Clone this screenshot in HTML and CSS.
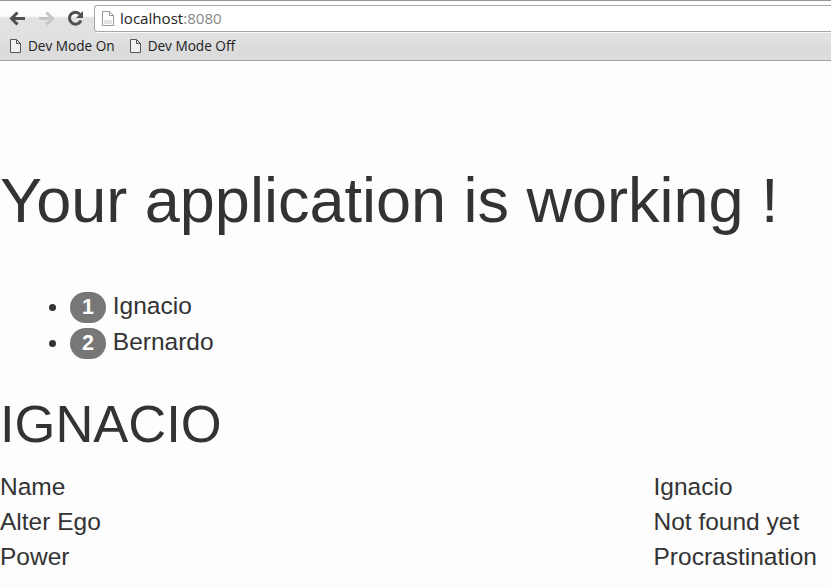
FILE: index.html
```html
<!DOCTYPE html>
<html lang="en">
<head>
<meta charset="utf-8">
<title>localhost:8080</title>
<link rel="stylesheet" href="styles.css">
</head>
<body>
<header class="chrome">
  <div class="toolbar">
    <svg class="nav" width="94" height="31" viewBox="0 0 94 31" fill="none" stroke-width="3">
      <path stroke="#505050" d="M25 18.500H12M17.500 12.500l-6 6 6 6"/>
      <path stroke="#c6c6c6" d="M39 18.500h13M46.500 12.500l6 6-6 6"/>
      <path stroke="#505050" d="M80 14.200a6 6 0 1 0 1 6.300"/>
      <path fill="#505050" d="M83 11v7h-7z"/>
    </svg>
    <div class="address">
      <svg class="page" width="12" height="15" viewBox="0 0 12 15" fill="#fff" stroke="#999"><path d="M.5.500h7l4 4v10H.500zM7.500.500v4h4"/><path fill="#e4e4e4" stroke="none" d="M2 9h8v4H2z"/></svg>
      <span>localhost<span class="port">:8080</span></span>
    </div>
  </div>
  <nav class="bookmarks">
    <svg class="page" width="11" height="14" viewBox="0 0 11 14" fill="#f3f3f3" stroke="#555"><path d="M.5.500h6l4 4v9H.500zM6.500.500v4h4"/></svg>
    <span class="mark">Dev Mode On</span>
    <svg class="page" width="11" height="14" viewBox="0 0 11 14" fill="#f3f3f3" stroke="#555"><path d="M.5.500h6l4 4v9H.500zM6.500.500v4h4"/></svg>
    <span class="mark">Dev Mode Off</span>
  </nav>
</header>
<main>
  <h1>Your application is working !</h1>
  <ul>
    <li><span class="badge">1</span> Ignacio</li>
    <li><span class="badge">2</span> Bernardo</li>
  </ul>
  <h2>IGNACIO</h2>
  <dl>
    <dt>Name</dt><dd>Ignacio</dd>
    <dt>Alter Ego</dt><dd>Not found yet</dd>
    <dt>Power</dt><dd>Procrastination</dd>
  </dl>
</main>
</body>
</html>
```

FILE: styles.css
```css
* { box-sizing: border-box; }
body { margin: 0; height: 587px; overflow: hidden; background: #fdfdfd; color: #333; font: 24.5px/35px "Liberation Sans", Arial, sans-serif; }
.chrome { height: 61px; border-top: 1px solid #96959b; border-bottom: 1px solid #a3a3a3; background: linear-gradient(#fdfdfd 15px, #e2e2e2 17px, #e0e0e0 42px, #dcdcdc 44px); font-family: "Open Sans", sans-serif; color: #222; }
.toolbar { display: flex; height: 32px; }
.nav { margin-top: -1px; }
.address { flex: 1; display: flex; align-items: center; gap: 6px; height: 27px; margin-top: 4px; padding-left: 7px; border: 1px solid #a6a6a6; border-right: 0; border-radius: 3px 0 0 3px; background: #fff; box-shadow: 0 1px #fafafa; font-size: 15.100px; line-height: 25px; }
.address > span { margin-top: -1px; }
.port { color: #888; }
.bookmarks { display: flex; align-items: center; height: 26px; padding-left: 10px; font-size: 13.600px; line-height: 26px; }
.mark { margin: 0 15px 0 7px; }
h1, h2 { margin: 0; font-weight: 400; }
h1 { padding-top: 103px; font-size: 63px; line-height: 72px; white-space: nowrap; }
ul { margin: 52px 0 0; padding-left: 70px; }
li { height: 36px; line-height: 35px; }
.badge { display: inline-block; width: 36px; height: 31px; border-radius: 16px; background: #777; color: #fff; font-size: 21.500px; font-weight: 700; line-height: 31px; text-align: center; }
h2 { margin-top: 35px; font-size: 52.500px; line-height: 58px; }
dl { display: grid; grid-template-columns: 653.500px 1fr; margin: 16px 0 0; }
dd { margin: 0; }
```
